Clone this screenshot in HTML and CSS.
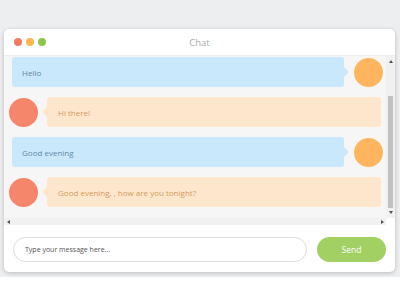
FILE: index.html
```html
<!DOCTYPE html>
<html>
<head>
<meta charset="utf-8">
<link rel="stylesheet" href="styles.css">
</head>
<body>
<div class="stage">
  <div class="window">
    <div class="header">
      <div class="dots"><span class="dot red"></span><span class="dot yellow"></span><span class="dot green"></span></div>
      <div class="title">Chat</div>
      <div></div>
    </div>
    <div class="body">
      <div class="messages">
        <div class="row me"><div class="bubble">Hello</div><div class="avatar"></div></div>
        <div class="row them"><div class="avatar"></div><div class="bubble">Hi there!</div></div>
        <div class="row me"><div class="bubble">Good evening</div><div class="avatar"></div></div>
        <div class="row them"><div class="avatar"></div><div class="bubble">Good evening, , how are you tonight?</div></div>
      </div>
      <div class="vbar">
        <span class="arrow up"></span>
        <div class="vtrack"><div class="vthumb"></div></div>
        <span class="arrow down"></span>
      </div>
      <div class="hbar">
        <span class="arrow left"></span>
        <span class="arrow right"></span>
      </div>
      <div class="corner"></div>
    </div>
    <div class="composer">
      <div class="input">Type your message here...</div>
      <div class="send">Send</div>
    </div>
  </div>
</div>
</body>
</html>
```

FILE: styles.css
```css
* { box-sizing: border-box; }
html, body { margin: 0; background: #ffffff; }
body { font-family: "Open Sans", "Liberation Sans", sans-serif; }
.stage {
  background: #eceef0;
  padding: 29px 5px 5px 4px;
}
.window {
  background: #ffffff;
  border-radius: 5px;
  box-shadow: 0 1px 4px rgba(0,0,0,0.22);
  overflow: hidden;
}
.header {
  height: 27px;
  display: grid;
  grid-template-columns: 1fr auto 1fr;
  align-items: center;
  border-bottom: 1px solid #eeeeee;
}
.dots { display: flex; gap: 4px; padding-left: 10px; }
.dot { width: 8px; height: 8px; border-radius: 50%; display: block; }
.dot.red { background: #f47a5f; }
.dot.yellow { background: #fdb54d; }
.dot.green { background: #8dc64a; }
.title { font-size: 9.5px; color: #aaaaaa; }
.body {
  display: grid;
  grid-template-columns: 1fr 9px;
  grid-template-rows: 162px 7px;
  background: #f6f6f6;
}
.messages {
  overflow: hidden;
  padding-top: 1px;
  display: flex;
  flex-direction: column;
  gap: 10px;
}
.row { display: flex; align-items: center; height: 30px; flex: none; }
.avatar { width: 29px; height: 29px; border-radius: 50%; flex: none; }
.bubble {
  flex: 1;
  height: 30px;
  border-radius: 3px;
  font-size: 8px;
  display: flex;
  align-items: center;
  position: relative;
}
.row.me { padding: 0 3px 0 8px; }
.row.me .bubble { background: #c9e8fb; color: #5f8aa6; padding-left: 10px; margin-right: 10px; }
.row.me .bubble::after {
  content: "";
  position: absolute;
  right: -5px;
  top: 10px;
  border-left: 5px solid #c9e8fb;
  border-top: 5px solid transparent;
  border-bottom: 5px solid transparent;
}
.row.me .avatar { background: #feb55e; }
.row.them { padding: 0 5px 0 5px; }
.row.them .avatar { background: #f6866b; }
.row.them .bubble { background: #fee6cc; color: #d39a5a; padding-left: 11px; margin-left: 9px; }
.row.them .bubble::before {
  content: "";
  position: absolute;
  left: -5px;
  top: 10px;
  border-right: 5px solid #fee6cc;
  border-top: 5px solid transparent;
  border-bottom: 5px solid transparent;
}
.vbar {
  background: #f1f1f1;
  display: flex;
  flex-direction: column;
  align-items: center;
}
.vtrack { flex: 1; width: 100%; display: flex; flex-direction: column; justify-content: flex-end; padding: 0 2px 1px 2px; }
.vthumb { height: 112px; background: #c1c1c1; }
.arrow { display: block; width: 0; height: 0; flex: none; }
.arrow.up { margin: 4px 0 3px; border-bottom: 3px solid #505050; border-left: 2px solid transparent; border-right: 2px solid transparent; }
.arrow.down { margin: 2px 0 4px; border-top: 3px solid #505050; border-left: 2px solid transparent; border-right: 2px solid transparent; }
.hbar {
  background: #f1f1f1;
  display: flex;
  justify-content: space-between;
  align-items: center;
  padding: 0 2px 0 3px;
}
.arrow.left { border-right: 3px solid #505050; border-top: 2px solid transparent; border-bottom: 2px solid transparent; }
.arrow.right { border-left: 3px solid #505050; border-top: 2px solid transparent; border-bottom: 2px solid transparent; }
.corner { background: #ffffff; }
.composer {
  display: flex;
  align-items: center;
  gap: 10px;
  padding: 12px 9px 10px 9px;
}
.input {
  width: 294px;
  height: 25px;
  border: 1px solid #dddddd;
  border-radius: 13px;
  background: #ffffff;
  font-size: 7px;
  color: #555555;
  display: flex;
  align-items: center;
  padding-left: 11px;
}
.send {
  width: 69px;
  height: 25px;
  border-radius: 13px;
  background: #a2d063;
  color: #ffffff;
  font-size: 8.5px;
  display: flex;
  align-items: center;
  justify-content: center;
}
```
